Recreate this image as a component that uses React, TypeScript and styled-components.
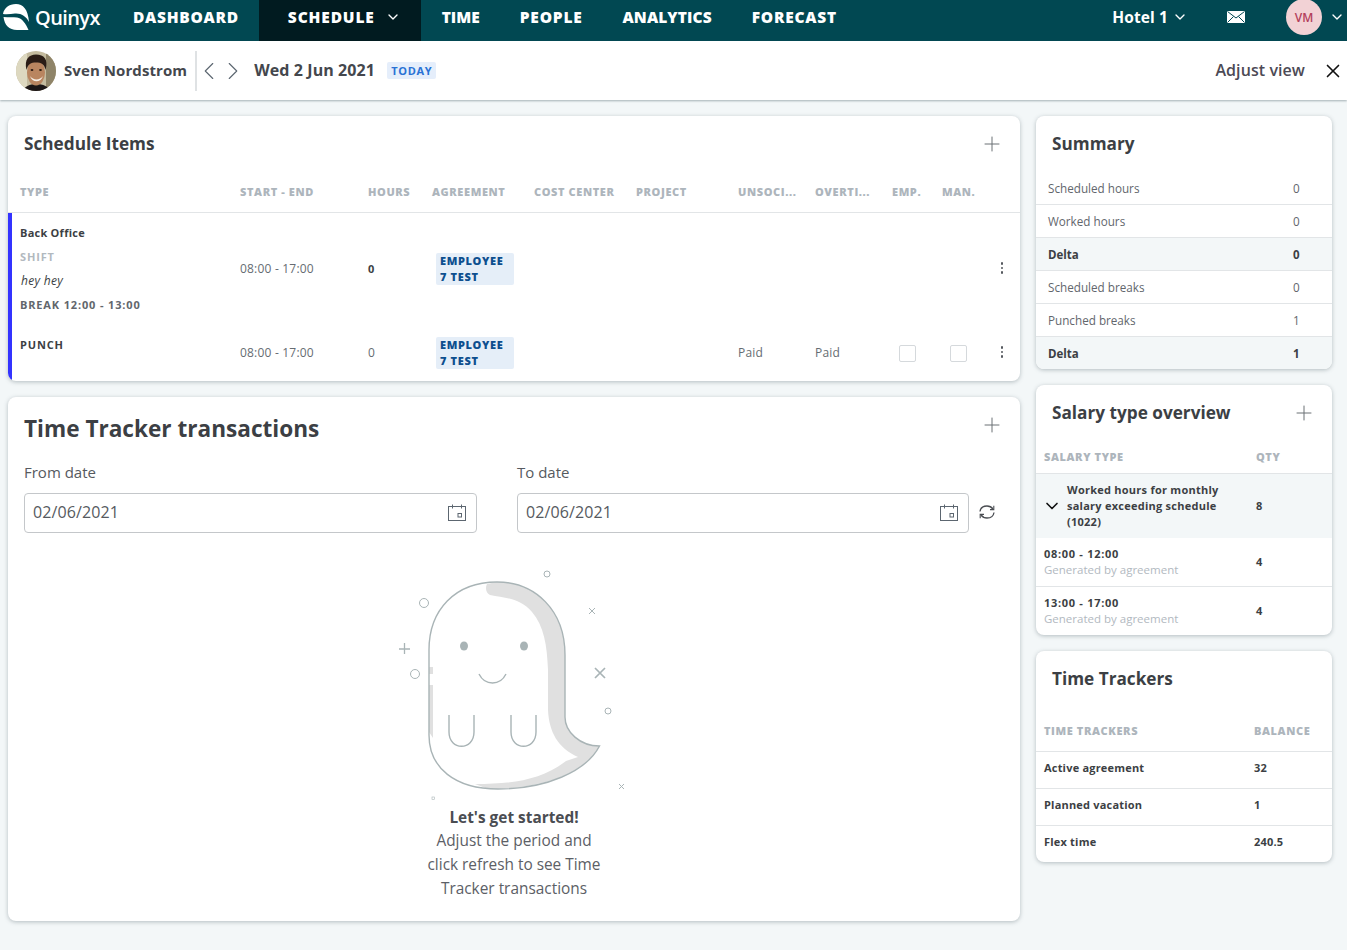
import { ReactNode } from "react";
import styled, { createGlobalStyle } from "styled-components";
import { ChevronDown, ChevronLeft, ChevronRight, Plus, X } from "lucide-react";

const GlobalStyle = createGlobalStyle`
  html, body {
    margin: 0;
    padding: 0;
    background: #f3f7f8;
    font-family: "Open Sans", "Noto Sans", "Liberation Sans", sans-serif;
    color: #3c3f44;
  }
  * { box-sizing: border-box; }
`;

const Page = styled.div`
  width: 1347px;
  height: 950px;
  overflow: hidden;
  background: #f3f7f8;
`;

const Nav = styled.nav`
  height: 41px;
  display: flex;
  align-items: center;
  background: #014852;
  color: #fff;
`;
const Brand = styled.div`
  width: 113px;
  height: 100%;
  display: flex;
  align-items: center;
  padding: 0 0 7px 3px;
  gap: 5px;
  font-size: 20px;
  font-weight: 600;
  letter-spacing: -0.6px;
`;
const NavItem = styled.div<{ $active?: boolean; $spacing: number; $left?: number }>`
  height: 100%;
  display: flex;
  align-items: center;
  padding: 0 20px 8px ${(p) => p.$left ?? 20}px;
  gap: 10px;
  font-size: 15.5px;
  font-weight: 800;
  letter-spacing: ${(p) => p.$spacing}px;
  background: ${(p) => (p.$active ? "#011b20" : "transparent")};
`;
const NavRight = styled.div`
  margin-left: auto;
  height: 100%;
  display: flex;
  align-items: center;
  padding: 0 2px 8px 0;
`;
const Hotel = styled.div`
  display: flex;
  align-items: center;
  gap: 4px;
  font-size: 15.5px;
  font-weight: 700;
  letter-spacing: 0.1px;
  margin-right: 39px;
`;
const Initials = styled.div`
  width: 36px;
  height: 36px;
  margin: 1px 7px 0 41px;
  border-radius: 50%;
  background: #f2d2d5;
  color: #b3405c;
  font-size: 12px;
  font-weight: 600;
  display: flex;
  align-items: center;
  justify-content: center;
`;

const SubBar = styled.header`
  height: 59px;
  display: flex;
  align-items: center;
  padding: 0 3px 0 16px;
  background: #fff;
  box-shadow: 0 1px 2px rgba(70, 90, 100, 0.45);
`;
const Person = styled.div`
  display: flex;
  align-items: center;
  gap: 8px;
  height: 40px;
  padding-right: 8px;
  border-right: 2px solid #dfe2e4;
`;
const BarText = styled.span<{ $weight?: number }>`
  margin-top: -2px;
  font-size: 15px;
  font-weight: ${(p) => p.$weight ?? 700};
  letter-spacing: 0.08px;
  color: #44474d;
`;
const DateText = styled(BarText)`
  font-size: 16px;
  letter-spacing: 0.1px;
`;
const Pager = styled.div`
  display: flex;
  align-items: center;
  margin: 0 6px 0 -3px;
  color: #5b6670;
  & > svg + svg {
    margin-left: -6px;
  }
`;
const TodayTag = styled.span`
  margin-left: 12px;
  padding: 1px 4px;
  border-radius: 2px;
  background: #e5eefb;
  color: #2a72d5;
  font-size: 11px;
  font-weight: 700;
  letter-spacing: 0.7px;
`;
const Adjust = styled.div`
  margin-left: auto;
  display: flex;
  align-items: center;
  gap: 17px;
  color: #4c4a55;
`;
const AdjustText = styled(BarText)`
  font-size: 16px;
  color: #4c4a55;
`;

const Content = styled.main`
  display: grid;
  grid-template-columns: 1012px 296px;
  column-gap: 16px;
  padding: 16px 0 0 8px;
  align-items: start;
`;
const Column = styled.div`
  display: flex;
  flex-direction: column;
  gap: 16px;
`;
const Card = styled.section<{ $height?: number }>`
  background: #fff;
  border-radius: 8px;
  box-shadow: 0 1px 4px rgba(60, 80, 90, 0.35);
  overflow: hidden;
  ${(p) => (p.$height ? `height: ${p.$height}px;` : "")}
`;
const CardHead = styled.div`
  height: 56px;
  display: flex;
  align-items: center;
  justify-content: space-between;
  padding: 0 16px;
  color: #6a7075;
`;
const CardTitle = styled.h2`
  margin: -2px 0 0;
  font-size: 17.2px;
  font-weight: 700;
  color: #3c3f44;
`;

const SCHEDULE_COLS = "220px 128px 64px 102px 102px 102px 77px 77px 50px 50px 46px";

const TableHead = styled.div`
  height: 41px;
  padding: 0 0 2px 12px;
  display: grid;
  grid-template-columns: ${SCHEDULE_COLS};
  align-items: center;
  border-bottom: 1px solid #e2e5e7;
`;
const HeadCell = styled.div`
  font-size: 11px;
  font-weight: 800;
  letter-spacing: 0.6px;
  color: #adb5bc;
  white-space: nowrap;
`;
const ScheduleBody = styled.div`
  border-left: 4px solid #3333ff;
`;
const ScheduleRow = styled.div<{ $height: number }>`
  height: ${(p) => p.$height}px;
  padding-left: 8px;
  display: grid;
  grid-template-columns: ${SCHEDULE_COLS};
  align-items: center;
  font-size: 12px;
  color: #666c72;
`;
const Cell = styled.div`
  margin-top: -2px;
  letter-spacing: 0.2px;
`;
const TypeCell = styled.div`
  align-self: start;
  padding-top: 8px;
  display: flex;
  flex-direction: column;
`;
const TypeLine = styled.div<{ $kind: "name" | "muted" | "note" | "break" | "punch" }>`
  height: 24px;
  line-height: 24px;
  font-size: ${(p) => (p.$kind === "note" ? 12 : 11)}px;
  font-weight: ${(p) => (p.$kind === "note" ? 400 : 700)};
  font-style: ${(p) => (p.$kind === "note" ? "italic" : "normal")};
  letter-spacing: ${(p) => (p.$kind === "name" ? 0.25 : p.$kind === "note" ? 0.3 : 0.85)}px;
  padding-left: ${(p) => (p.$kind === "note" ? 1 : 0)}px;
  color: ${(p) =>
    p.$kind === "muted" ? "#b2b9bf" : p.$kind === "break" ? "#62666c" : "#3c3f44"};
`;
const Strong = styled.span`
  margin-top: -1px;
  font-size: 11px;
  font-weight: 700;
  color: #3c3f44;
`;
const Tag = styled.div`
  width: 78px;
  margin-left: 4px;
  padding: 0 4px;
  border-radius: 2px;
  background: #e5eef8;
  color: #0d4f8f;
  font-size: 11px;
  font-weight: 800;
  letter-spacing: 0.65px;
  line-height: 16px;
`;
const CheckBox = styled.div<{ $inset: number }>`
  width: 17px;
  height: 17px;
  margin-left: ${(p) => p.$inset}px;
  border: 1px solid #d5d9dc;
  border-radius: 2px;
`;
const Dots = styled.div`
  margin-top: -2px;
  display: flex;
  flex-direction: column;
  align-items: center;
  gap: 2px;
  width: 20px;
  & > i {
    width: 2.5px;
    height: 2.5px;
    background: #55585e;
    border-radius: 50%;
  }
`;

const TrackerHead = styled(CardHead)`
  height: 65px;
  padding-bottom: 2px;
`;
const TrackerAdd = styled.div`
  display: flex;
  margin-top: -7px;
`;
const BigTitle = styled.h1`
  margin: 0;
  font-size: 22.6px;
  font-weight: 700;
  color: #3c3f44;
`;
const DateRow = styled.div`
  display: grid;
  grid-template-columns: 453px 452px 36px;
  column-gap: 40px;
  padding: 0 16px;
  align-items: end;
`;
const Field = styled.label`
  display: flex;
  flex-direction: column;
  gap: 11px;
  font-size: 15px;
  color: #565a60;
`;
const InputBox = styled.div`
  height: 40px;
  display: flex;
  align-items: center;
  justify-content: space-between;
  padding: 0 10px 1px 8px;
  border: 1px solid #c4c7ca;
  border-radius: 4px;
  font-size: 16px;
  letter-spacing: 0.1px;
  color: #565a60;
`;
const InputValue = styled.span`
  margin-top: -2px;
`;
const RefreshBtn = styled.div`
  height: 40px;
  margin-left: -31px;
  padding-bottom: 2px;
  display: flex;
  align-items: center;
`;
const Empty = styled.div`
  margin-top: 27px;
  display: flex;
  flex-direction: column;
  align-items: center;
  text-align: center;
`;
const EmptyArt = styled.svg`
  display: block;
  margin-bottom: -4px;
`;
const EmptyTitle = styled.div`
  font-size: 15.4px;
  font-weight: 700;
  line-height: 24px;
  color: #4a4d52;
`;
const EmptyText = styled.div`
  margin-top: -1px;
  font-size: 15.4px;
  line-height: 24px;
  color: #5c6066;
  width: 180px;
`;

const KeyRow = styled.div<{ $shade?: boolean; $bold?: boolean; $last?: boolean }>`
  height: ${(p) => (p.$last ? 32 : 33)}px;
  display: grid;
  grid-template-columns: 245px 1fr;
  align-items: center;
  padding: 0 0 ${(p) => (p.$bold ? 0 : 1)}px 12px;
  font-size: ${(p) => (p.$bold ? 11.5 : 11.7)}px;
  font-weight: ${(p) => (p.$bold ? 700 : 400)};
  color: ${(p) => (p.$bold ? "#3c3f44" : "#62666c")};
  background: ${(p) => (p.$shade ? "#f3f7f8" : "#fff")};
  border-bottom: ${(p) => (p.$last ? "none" : "1px solid #e2e5e7")};
`;

const SideHead = styled.div<{ $cols: string; $height: number; $shift: number }>`
  height: ${(p) => p.$height}px;
  display: grid;
  grid-template-columns: ${(p) => p.$cols};
  align-items: center;
  padding: ${(p) => Math.max(p.$shift, 0)}px 8px ${(p) => Math.max(-p.$shift, 0)}px;
  border-bottom: 1px solid #e2e5e7;
`;
const SalaryOpen = styled.div`
  height: 64px;
  display: grid;
  grid-template-columns: 23px 189px 1fr;
  align-items: center;
  padding-left: 8px;
  background: #f3f7f8;
  font-size: 11px;
  font-weight: 700;
  letter-spacing: 0.25px;
  line-height: 16px;
  color: #3c3f44;
`;
const SalaryName = styled.div`
  width: 165px;
`;
const SalaryToggle = styled.div`
  margin-left: -2px;
  display: flex;
  color: #111;
`;
const SalaryRow = styled.div<{ $last?: boolean }>`
  height: ${(p) => (p.$last ? 48 : 49)}px;
  display: grid;
  grid-template-columns: 212px 1fr;
  align-items: center;
  padding-left: 8px;
  border-bottom: ${(p) => (p.$last ? "none" : "1px solid #e2e5e7")};
  font-size: 11px;
  font-weight: 700;
  letter-spacing: 0.7px;
  line-height: 16px;
  color: #3c3f44;
`;
const Generated = styled.div`
  font-size: 11.5px;
  font-weight: 400;
  letter-spacing: 0;
  color: #b2b9bf;
`;
const TrackerRow = styled.div<{ $last?: boolean }>`
  height: ${(p) => (p.$last ? 36 : 37)}px;
  display: grid;
  grid-template-columns: 210px 1fr;
  align-items: center;
  padding: 0 0 ${(p) => (p.$last ? 5 : 6)}px 8px;
  border-bottom: ${(p) => (p.$last ? "none" : "1px solid #e2e5e7")};
  font-size: 11px;
  font-weight: 700;
  letter-spacing: 0.2px;
  color: #3c3f44;
`;

function Logo() {
  return (
    <svg width="27" height="27" viewBox="0 0 27 27" fill="#fff">
      <path d="M0 10C1 4 6 0 13 0 20 0 25 5 26 18 23 12 18 9 12 9.5 8 10 4 10.5 0 10Z" />
      <path d="M0.5 13C6 13.5 10 13 14 13.5 19 14 23 20 25.5 26L14 26C6 26 1.5 21 0.5 13Z" />
    </svg>
  );
}

function MailIcon() {
  return (
    <svg width="18" height="12" viewBox="0 0 18 12">
      <rect width="18" height="12" fill="#fff" />
      <path d="M0.5 0.5L9 7L17.5 0.5M0.5 11.5L6.5 5.5M17.5 11.5L11.5 5.5" stroke="#014852" strokeWidth="1" fill="none" />
    </svg>
  );
}

function Avatar() {
  return (
    <svg width="40" height="40" viewBox="0 0 40 40">
      <defs>
        <clipPath id="avatarClip">
          <circle cx="20" cy="20" r="20" />
        </clipPath>
        <filter id="avatarBlur">
          <feGaussianBlur stdDeviation="0.6" />
        </filter>
      </defs>
      <g clipPath="url(#avatarClip)">
        <rect width="40" height="40" fill="#c4bb9f" />
        <g filter="url(#avatarBlur)">
          <rect x="0" y="0" width="11" height="40" fill="#ddd8c0" />
          <rect x="30" y="0" width="10" height="40" fill="#8f8468" />
          <path d="M6 42C8 35 14 33 20 33 27 33 33 35 35 42Z" fill="#1d1917" />
          <ellipse cx="20" cy="21.5" rx="9" ry="13" fill="#b98560" />
          <path d="M10.5 19C8 8 13 3.5 20 3.5 28 3.5 32.5 8 29.5 19 28.5 13 25 11.5 20 11.5 15 11.5 12 13 10.5 19Z" fill="#2a1f19" />
          <path d="M14 25C17 29.5 24 29.5 27 25 25 32 16 32 14 25Z" fill="#f6efe6" />
          <ellipse cx="16" cy="19" rx="1.4" ry="1" fill="#2c1c12" />
          <ellipse cx="24.5" cy="19" rx="1.4" ry="1" fill="#2c1c12" />
        </g>
      </g>
    </svg>
  );
}

function CalendarIcon() {
  return (
    <svg width="18" height="17" viewBox="0 0 18 17" fill="none" stroke="#5c6670" strokeWidth="1">
      <rect x="0.5" y="2.5" width="17" height="14" />
      <path d="M4.5 0.5V4.5M13.5 0.5V4.5" />
      <rect x="10" y="9.5" width="3.5" height="3.5" />
    </svg>
  );
}

function RefreshIcon() {
  return (
    <svg width="18" height="18" viewBox="0 0 18 18" fill="none" stroke="#4a4d52" strokeWidth="1.3">
      <path d="M2 8.5C2.5 5 5.5 3 9 3 11.5 3 13.5 4 15 6" />
      <path d="M16 9.5C15.5 13 12.5 15 9 15 6.5 15 4.5 14 3 12" />
      <path d="M15.8 2.8V6.6H12M2.2 15.2V11.4H6" strokeWidth="1.1" />
    </svg>
  );
}

function Ghost() {
  const line = "#a9b4b6";
  return (
    <EmptyArt width="260" height="250" viewBox="4 0 260 250" fill="none" stroke={line} strokeWidth="1">
      <path
        stroke="none"
        fill="#e0e0e0"
        d="M107 24C105 28 106 33 110 35 125 38 140 38 152 52 164 66 167 85 168 110L168 150C169 172 178 188 198 197L186 201C160 221 130 224 95 224L108 229C165 229 206 212 219.5 186 200 186 185 172 185 157L185 95C185 50 155 22 117 22Z"
      />
      <path stroke="none" fill="#e0e0e0" d="M49 107H53V114H49ZM49 125H53V178L49 172Z" />
      <path
        strokeWidth="1.4"
        d="M49 90C49 50 75 22 117 22 155 22 185 50 185 95L185 157C185 172 200 186 219.5 186 206 212 165 229 118 229 75 229 49 208 49 175Z"
      />
      <ellipse cx="84" cy="86" rx="4" ry="4.5" fill={line} stroke="none" />
      <ellipse cx="144" cy="86" rx="4" ry="4.5" fill={line} stroke="none" />
      <path d="M99 114C105 126 120 126 126 114" strokeWidth="1.4" />
      <path d="M69 155V172C69 191 94 191 94 172V155M131 155V172C131 191 156 191 156 172V155" strokeWidth="1.4" />
      <circle cx="44" cy="43" r="4.5" />
      <circle cx="35" cy="114" r="4.5" />
      <circle cx="167" cy="14" r="3" />
      <circle cx="228" cy="151" r="3" />
      <path d="M19 89H30M24.5 83V94" strokeWidth="1.3" />
      <path d="M209 48L215 54M215 48L209 54" />
      <path d="M215 108L225 118M225 108L215 118" strokeWidth="1.7" />
      <path d="M239 224L244 229M244 224L239 229" />
      <rect x="52" y="237" width="2.5" height="2.5" strokeWidth="0.6" />
    </EmptyArt>
  );
}

function DateField({ label, value }: { label: string; value: string }) {
  return (
    <Field>
      {label}
      <InputBox>
        <InputValue>{value}</InputValue>
        <CalendarIcon />
      </InputBox>
    </Field>
  );
}

const scheduleHeads = [
  "TYPE", "START - END", "HOURS", "AGREEMENT", "COST CENTER", "PROJECT",
  "UNSOCI...", "OVERTI...", "EMP.", "MAN.",
];
const summaryRows: [string, string, boolean][] = [
  ["Scheduled hours", "0", false],
  ["Worked hours", "0", false],
  ["Delta", "0", true],
  ["Scheduled breaks", "0", false],
  ["Punched breaks", "1", false],
  ["Delta", "1", true],
];

function EmployeeTag(): ReactNode {
  return (
    <Tag>
      EMPLOYEE
      <br />7 TEST
    </Tag>
  );
}

export default function App() {
  return (
    <Page>
      <GlobalStyle />
      <Nav>
        <Brand>
          <Logo />
          Quinyx
        </Brand>
        <NavItem $spacing={0.72}>DASHBOARD</NavItem>
        <NavItem $active $left={29} $spacing={0.85}>
          SCHEDULE
          <ChevronDown size={16} strokeWidth={2} />
        </NavItem>
        <NavItem $left={21} $spacing={0}>TIME</NavItem>
        <NavItem $spacing={0.8}>PEOPLE</NavItem>
        <NavItem $spacing={0.1}>ANALYTICS</NavItem>
        <NavItem $spacing={0.75}>FORECAST</NavItem>
        <NavRight>
          <Hotel>
            Hotel 1
            <ChevronDown size={16} strokeWidth={2} />
          </Hotel>
          <MailIcon />
          <Initials>VM</Initials>
          <ChevronDown size={16} strokeWidth={2} />
        </NavRight>
      </Nav>
      <SubBar>
        <Person>
          <Avatar />
          <BarText>Sven Nordstrom</BarText>
        </Person>
        <Pager>
          <ChevronLeft size={30} strokeWidth={0.9} />
          <ChevronRight size={30} strokeWidth={0.9} />
        </Pager>
        <DateText>Wed 2 Jun 2021</DateText>
        <TodayTag>TODAY</TodayTag>
        <Adjust>
          <AdjustText $weight={600}>Adjust view</AdjustText>
          <X size={22} strokeWidth={1.8} color="#111" />
        </Adjust>
      </SubBar>
      <Content>
        <Column>
          <Card>
            <CardHead>
              <CardTitle>Schedule Items</CardTitle>
              <Plus size={24} strokeWidth={1} />
            </CardHead>
            <TableHead>
              {scheduleHeads.map((h) => (
                <HeadCell key={h}>{h}</HeadCell>
              ))}
            </TableHead>
            <ScheduleBody>
              <ScheduleRow $height={112}>
                <TypeCell>
                  <TypeLine $kind="name">Back Office</TypeLine>
                  <TypeLine $kind="muted">SHIFT</TypeLine>
                  <TypeLine $kind="note">hey hey</TypeLine>
                  <TypeLine $kind="break">BREAK 12:00 - 13:00</TypeLine>
                </TypeCell>
                <Cell>08:00 - 17:00</Cell>
                <Strong>0</Strong>
                <EmployeeTag />
                <div />
                <div />
                <div />
                <div />
                <div />
                <div />
                <Dots><i /><i /><i /></Dots>
              </ScheduleRow>
              <ScheduleRow $height={56}>
                <TypeCell>
                  <TypeLine $kind="punch">PUNCH</TypeLine>
                </TypeCell>
                <Cell>08:00 - 17:00</Cell>
                <Cell>0</Cell>
                <EmployeeTag />
                <div />
                <div />
                <Cell>Paid</Cell>
                <Cell>Paid</Cell>
                <CheckBox $inset={7} />
                <CheckBox $inset={8} />
                <Dots><i /><i /><i /></Dots>
              </ScheduleRow>
            </ScheduleBody>
          </Card>
          <Card $height={524}>
            <TrackerHead>
              <BigTitle>Time Tracker transactions</BigTitle>
              <TrackerAdd>
                <Plus size={24} strokeWidth={1} />
              </TrackerAdd>
            </TrackerHead>
            <DateRow>
              <DateField label="From date" value="02/06/2021" />
              <DateField label="To date" value="02/06/2021" />
              <RefreshBtn>
                <RefreshIcon />
              </RefreshBtn>
            </DateRow>
            <Empty>
              <Ghost />
              <EmptyTitle>Let's get started!</EmptyTitle>
              <EmptyText>Adjust the period and click refresh to see Time Tracker transactions</EmptyText>
            </Empty>
          </Card>
        </Column>
        <Column>
          <Card>
            <CardHead>
              <CardTitle>Summary</CardTitle>
            </CardHead>
            {summaryRows.map(([label, value, bold], i) => (
              <KeyRow key={i} $bold={bold} $shade={bold} $last={i === summaryRows.length - 1}>
                <span>{label}</span>
                <span>{value}</span>
              </KeyRow>
            ))}
          </Card>
          <Card>
            <CardHead>
              <CardTitle>Salary type overview</CardTitle>
              <Plus size={24} strokeWidth={1} />
            </CardHead>
            <SideHead $cols="212px 1fr" $height={33} $shift={-2}>
              <HeadCell>SALARY TYPE</HeadCell>
              <HeadCell>QTY</HeadCell>
            </SideHead>
            <SalaryOpen>
              <SalaryToggle>
                <ChevronDown size={20} strokeWidth={2} />
              </SalaryToggle>
              <SalaryName>Worked hours for monthly salary exceeding schedule (1022)</SalaryName>
              <div>8</div>
            </SalaryOpen>
            <SalaryRow>
              <div>
                08:00 - 12:00
                <Generated>Generated by agreement</Generated>
              </div>
              <div>4</div>
            </SalaryRow>
            <SalaryRow $last>
              <div>
                13:00 - 17:00
                <Generated>Generated by agreement</Generated>
              </div>
              <div>4</div>
            </SalaryRow>
          </Card>
          <Card>
            <CardHead>
              <CardTitle>Time Trackers</CardTitle>
            </CardHead>
            <SideHead $cols="210px 1fr" $height={45} $shift={2}>
              <HeadCell>TIME TRACKERS</HeadCell>
              <HeadCell>BALANCE</HeadCell>
            </SideHead>
            <TrackerRow>
              <div>Active agreement</div>
              <div>32</div>
            </TrackerRow>
            <TrackerRow>
              <div>Planned vacation</div>
              <div>1</div>
            </TrackerRow>
            <TrackerRow $last>
              <div>Flex time</div>
              <div>240.5</div>
            </TrackerRow>
          </Card>
        </Column>
      </Content>
    </Page>
  );
}
